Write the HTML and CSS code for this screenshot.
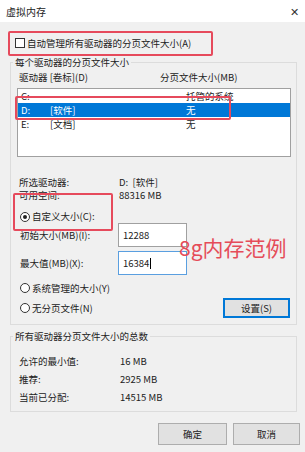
FILE: index.html
```html
<!DOCTYPE html>
<html>
<head>
    <meta charset="utf-8">
    <title>虚拟内存</title>
    <link rel="stylesheet" href="styles.css">
</head>
<body>
    <div class="titlebar">
        <span class="title">虚拟内存</span>
        <span class="close">&#x2715;</span>
    </div>

    <div class="dialog">
        <div class="check-row">
            <span class="checkbox"></span>
            <span>自动管理所有驱动器的分页文件大小(A)</span>
        </div>

        <fieldset class="group drives">
            <legend>每个驱动器的分页文件大小</legend>
            <div class="list-head">
                <span>驱动器 [卷标](D)</span>
                <span>分页文件大小(MB)</span>
            </div>
            <div class="listbox">
                <div class="list-row"><span>C:</span><span></span><span>托管的系统</span></div>
                <div class="list-row selected"><span>D:</span><span>[软件]</span><span>无</span></div>
                <div class="list-row"><span>E:</span><span>[文档]</span><span>无</span></div>
            </div>

            <div class="info">
                <span>所选驱动器:</span><span>D:&nbsp;&nbsp;[软件]</span>
                <span>可用空间:</span><span>88316 MB</span>
            </div>

            <div class="radio-row custom">
                <span class="radio checked"></span>
                <span>自定义大小(C):</span>
            </div>
            <div class="size-row">
                <span>初始大小(MB)(I):</span>
                <div class="input">12288</div>
            </div>
            <div class="size-row">
                <span>最大值(MB)(X):</span>
                <div class="input focused">16384<span class="caret"></span></div>
            </div>
            <div class="radio-row">
                <span class="radio"></span>
                <span>系统管理的大小(Y)</span>
            </div>
            <div class="last-row">
                <div class="radio-row flat">
                    <span class="radio"></span>
                    <span>无分页文件(N)</span>
                </div>
                <div class="button default">设置(S)</div>
            </div>
        </fieldset>

        <fieldset class="group totals">
            <legend>所有驱动器分页文件大小的总数</legend>
            <div class="totals-grid">
                <span>允许的最小值:</span><span>16 MB</span>
                <span>推荐:</span><span>2925 MB</span>
                <span>当前已分配:</span><span>14515 MB</span>
            </div>
        </fieldset>

        <div class="buttons">
            <div class="button ok">确定</div>
            <div class="button cancel">取消</div>
        </div>
    </div>

    <!-- annotations drawn on top of the dialog -->
    <div class="mark mark-auto"></div>
    <div class="mark mark-drive"></div>
    <div class="mark mark-custom"></div>
    <div class="note">8g内存范例</div>
</body>
</html>
```

FILE: styles.css
```css
body {
    margin: 0;
    width: 305px;
    height: 452px;
    position: relative;
    overflow: hidden;
    background-color: #f0f0f0;
    font-family: "Microsoft YaHei UI", "Noto Sans CJK SC", sans-serif;
    font-size: 9.5px;
    color: #222;
}

.titlebar {
    height: 22px;
    background: white;
    display: flex;
    justify-content: space-between;
    align-items: center;
    padding: 0 6px;
}
.title {
    font-size: 10px;
}
.close {
    font-size: 11px;
    color: #333;
}

.dialog {
    padding: 0 8px 0 10px;
}

.check-row {
    display: flex;
    align-items: center;
    gap: 2px;
    margin: 14px 0 5px 5px;
    line-height: 14px;
}
.checkbox {
    width: 8px;
    height: 8px;
    border: 1px solid #333;
    background: white;
}

.group {
    margin: 0;
    padding: 0 6px 6px 6px;
    border: 1px solid #dcdcdc;
    min-width: 0;
}
.group legend {
    padding: 0 2px;
    margin-left: -4px;
    line-height: 14px;
}

.list-head {
    display: grid;
    grid-template-columns: 141px auto;
    padding-left: 2px;
    line-height: 14px;
    margin-top: 1px;
}

.listbox {
    margin-top: 4px;
    margin-right: -1px;
    height: 67px;
    background: white;
    border: 1px solid #a0a0a0;
}
.list-row {
    display: grid;
    grid-template-columns: 29px 136px auto;
    padding-left: 3px;
    line-height: 14px;
}
.list-row.selected {
    background: #0078d7;
    color: white;
}

.info {
    display: grid;
    grid-template-columns: 100px auto;
    padding-left: 2px;
    margin-top: 19px;
    line-height: 13px;
}

.radio-row {
    display: flex;
    align-items: center;
    gap: 2px;
    padding-left: 3px;
    line-height: 14px;
    margin-top: 6px;
}
.radio-row.custom {
    margin-top: 8px;
    line-height: 13px;
}
.radio-row.flat {
    margin-top: 0;
}
.radio {
    width: 8px;
    height: 8px;
    border: 1px solid #333;
    border-radius: 50%;
    background: white;
    display: flex;
    align-items: center;
    justify-content: center;
}
.radio.checked::after {
    content: '';
    width: 4px;
    height: 4px;
    border-radius: 50%;
    background: #222;
}

.size-row {
    display: grid;
    grid-template-columns: 98px 69px;
    align-items: center;
    padding-left: 3px;
    margin-bottom: 4px;
}
.size-row:last-of-type {
    margin-bottom: 0;
}
.input {
    height: 22px;
    line-height: 22px;
    padding-left: 4px;
    background: white;
    border: 1px solid #a0a0a0;
    display: flex;
    align-items: center;
}
.input.focused {
    border-color: #5a9fe0;
}
.caret {
    display: inline-block;
    width: 1px;
    height: 11px;
    background: #000;
    margin-left: 1px;
}

.last-row {
    display: flex;
    justify-content: space-between;
    align-items: center;
    margin-top: 3px;
}

.button {
    height: 20px;
    line-height: 18px;
    box-sizing: border-box;
    text-align: center;
    background: #e1e1e1;
    border: 1px solid #adadad;
}
.button.default {
    width: 67px;
    border: 2px solid #0078d7;
    line-height: 16px;
}

.totals {
    margin-top: 4px;
    padding-bottom: 5px;
}
.totals-grid {
    display: grid;
    grid-template-columns: 101px auto;
    padding-left: 2px;
    margin-top: 9px;
    line-height: 18px;
}

.buttons {
    display: flex;
    justify-content: flex-end;
    gap: 6px;
    margin-top: 11px;
    margin-right: -3px;
}
.buttons .button {
    height: 22px;
    line-height: 20px;
}
.button.ok {
    width: 69px;
}
.button.cancel {
    width: 67px;
}

.mark {
    position: absolute;
    border: 2px solid #e64a5c;
    border-radius: 2px;
    box-sizing: border-box;
}
.mark-auto {
    left: 8px;
    top: 31px;
    width: 205px;
    height: 25px;
}
.mark-drive {
    left: 15px;
    top: 96px;
    width: 216px;
    height: 24px;
}
.mark-custom {
    left: 13px;
    top: 193px;
    width: 100px;
    height: 38px;
}

.note {
    position: absolute;
    left: 179px;
    top: 233px;
    font-size: 21px;
    line-height: 28px;
    color: #e54c59;
}
```
